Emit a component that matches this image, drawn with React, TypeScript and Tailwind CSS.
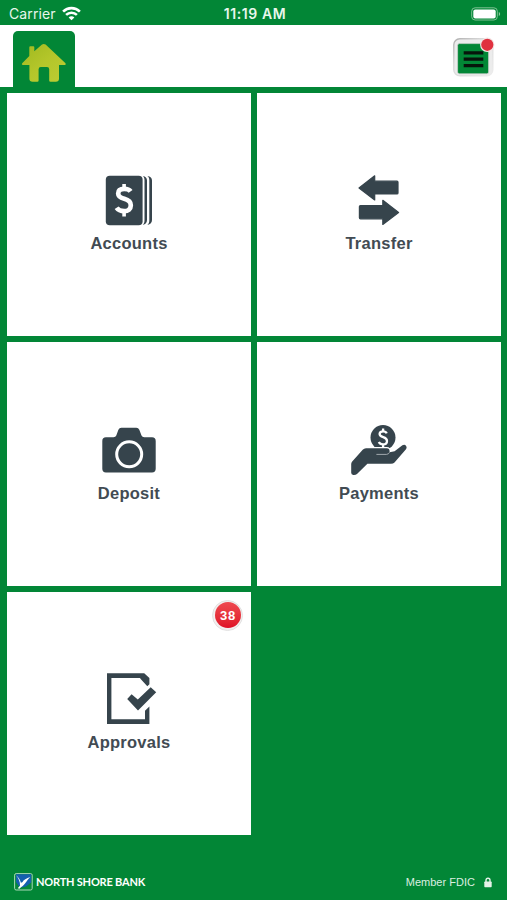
import { FC, ReactNode } from "react";

const ink = "#36444c";

const WifiIcon: FC = () => (
    <svg width="19" height="15" viewBox="0 0 19 15" fill="none" stroke="#fff" strokeWidth="2.6">
        <path d="M1.1 5.6C5.8 .9 13.2 .9 17.9 5.6" />
        <path d="M4.1 8.9C7.1 6 11.9 6 14.9 8.9" />
        <path d="M9.5 14.3L6.6 11.4C8.2 10 10.8 10 12.4 11.4Z" fill="#fff" stroke="none" />
    </svg>
);

const BatteryIcon: FC = () => (
    <svg width="30" height="14" viewBox="0 0 30 14">
        <rect x=".7" y=".8" width="25.6" height="12.2" rx="3.4" fill="none" stroke="#7fc193" />
        <rect x="2.3" y="2.4" width="22.4" height="9" rx="2" fill="#fff" />
        <path d="M27.8 5V9C29.6 8.2 29.6 5.8 27.8 5Z" fill="#8fc9a0" />
    </svg>
);

const HomeIcon: FC = () => (
    <svg width="46" height="40" viewBox="0 0 46 40">
        <defs>
            <linearGradient id="roof" x1="0" y1="0" x2="1" y2="1">
                <stop offset="0" stopColor="#9fb81f" />
                <stop offset=".5" stopColor="#b4c62a" />
                <stop offset="1" stopColor="#bccd34" />
            </linearGradient>
        </defs>
        <path
            d="M8.3 4.2Q8.3 3.2 9.3 3.2H12.3Q13.3 3.2 13.3 4.2V8.3L21 1.6Q22.8 .2 24.6 1.6L44.5 20.3Q45.4 22 43.8 22H38V35.5Q38 38.7 34.8 38.7H29.5Q28.2 38.7 28.2 37.4V26.2Q28.2 24 26 24H19.8Q17.6 24 17.6 26.2V37.4Q17.6 38.7 16.3 38.7H11.6Q8.4 38.7 8.4 35.5V22H1.8Q.2 22 1.2 20.3L8.3 13Z"
            fill="url(#roof)"
        />
    </svg>
);

const MenuIcon: FC = () => (
    <svg width="46" height="44" viewBox="0 0 46 44">
        <defs>
            <linearGradient id="bezel" x1="0" y1="0" x2="1" y2="1">
                <stop offset="0" stopColor="#b0b0b0" />
                <stop offset=".35" stopColor="#d8d8d8" />
                <stop offset="1" stopColor="#ededed" />
            </linearGradient>
        </defs>
        <rect x="1.8" y="3.8" width="39" height="37" rx="6" fill="#ececec" stroke="url(#bezel)" strokeWidth="1.4" />
        <rect x="5.6" y="8.6" width="31" height="30.2" rx="1.8" fill="#028736" stroke="#d2d2d2" strokeWidth=".7" />
        <path d="M11.7 17.8H31.3M11.7 24.2H31.3M11.7 30.6H31.3" stroke="#06150b" strokeWidth="3.2" />
        <circle cx="35.3" cy="9.8" r="7.2" fill="#f3e6e6" />
        <circle cx="35.3" cy="9.8" r="6.1" fill="#e0313f" />
    </svg>
);

const AccountsIcon: FC = () => (
    <svg width="60" height="60" viewBox="0 0 60 60" fill={ink}>
        <rect x="6.8" y="5.7" width="36.8" height="49.5" rx="4" />
        <path d="M43.8 6C46.5 6.5 48 8 48 10.5V50C48 52.6 46.5 54.2 43.8 54.9C45 53.8 45.5 52.3 45.5 50.5V10C45.5 8.2 45 7 43.8 6Z" />
        <path d="M48.4 6C51.5 6.5 53 8 53 10.5V50C53 52.6 51.5 54.2 48.4 54.9C49.8 53.8 50.3 52.3 50.3 50.5V10C50.3 8.2 49.8 7 48.4 6Z" />
        <path
            d="M31.6 21.3C30.3 19.4 27.9 18.8 25.2 18.8C21.4 18.8 19.2 20.5 19.2 23.4C19.2 26.5 21.5 27.7 25.3 28.8C29.4 30 31.8 31.4 31.8 35.2C31.8 39.2 29 41.2 25.2 41.2C21.8 41.2 19.2 40.2 17.6 37.8"
            fill="none"
            stroke="#fff"
            strokeWidth="4.7"
        />
        <path d="M25.1 14V18.8M25.1 41V46.6" stroke="#fff" strokeWidth="3.6" />
    </svg>
);

const TransferIcon: FC = () => (
    <svg width="60" height="60" viewBox="0 0 60 60" fill={ink} stroke={ink} strokeWidth="1.2" strokeLinejoin="round">
        <path d="M10 17.9L25.7 5.8V11.2H48Q49 11.2 49 12.2V23Q49 24 48 24H25.7V29.9Z" />
        <path d="M49.6 42.4L33.8 30.3V35.5H11.5Q10.4 35.5 10.4 36.5V47.8Q10.4 48.8 11.5 48.8H33.8V54.4Z" />
    </svg>
);

const DepositIcon: FC = () => (
    <svg width="60" height="60" viewBox="0 0 60 60" fill={ink}>
        <path d="M7 17.2H14.5Q16.6 17.2 17.3 15.4L19.4 9.8Q20.3 7.8 22.4 7.8H37.3Q39.4 7.8 40.3 9.8L42.5 15.4Q43.2 17.2 45.3 17.2H53Q56.7 17.2 56.7 20.9V48.8Q56.7 52.5 53 52.5H7Q3.3 52.5 3.3 48.8V20.9Q3.3 17.2 7 17.2Z" />
        <circle cx="30.2" cy="34.3" r="12.5" fill="none" stroke="#fff" strokeWidth="3" />
    </svg>
);

const PaymentsIcon: FC = () => (
    <svg width="60" height="60" viewBox="0 0 60 60" fill={ink}>
        <circle cx="34" cy="17.6" r="12.5" />
        <path
            d="M37.7 13.4C37.1 12 35.8 11.3 34.1 11.3C32 11.3 30.6 12.3 30.6 14C30.6 15.8 32.1 16.5 34.2 17.1C36.5 17.8 38 18.7 38 20.9C38 23.1 36.3 24.4 34 24.4C32 24.4 30.5 23.6 29.8 22.1M34.1 8.6V11.5M34.1 24.2V27"
            fill="none"
            stroke="#fff"
            strokeWidth="2.3"
        />
        <path
            d="M17 28.3H37.8Q40.6 28.5 40.6 31.2V32.3L45.6 31.2L53.4 25.3Q55.6 24 57 25.8Q58.2 27.3 57.2 28.9L45.5 42.5Q44.2 43.8 42 43.8H18.4L8 54Q6.6 55.1 4.3 54.9Q2.2 54.7 2.2 52.8V43.9Q2.2 42.6 3.2 41.5L13.7 29.8Q15 28.3 17 28.3Z"
            stroke="#fff"
            strokeWidth="2.4"
            paintOrder="stroke"
        />
        <path d="M27.4 34.4H37.5Q39.6 34.3 40.6 32.3" fill="none" stroke="#aeb4b8" strokeWidth=".9" />
    </svg>
);

const ApprovalsIcon: FC = () => (
    <svg width="60" height="60" viewBox="0 0 60 60" fill={ink}>
        <path d="M8 4.3H45.2L50.4 8.9V15.2L48.3 17.2L41.2 9.5V9H12.4V50.2H46V41.8L50.4 37.4V55H8Z" />
        <path d="M28.2 29.9L32.6 25.3L38.8 30.4L51.7 18.2L57.2 23.3L39 41.4Z" />
    </svg>
);

const BankLogo: FC = () => (
    <svg width="19" height="18" viewBox="0 0 19 18">
        <rect x=".6" y=".6" width="17.6" height="16.4" rx="1.6" fill="#07883a" stroke="#a9dab7" />
        <path d="M2 1.2H17.2V9.5L12 13.6L6 14.8L2 9Z" fill="#1560ae" />
        <path d="M2 2.3C5 4.8 6.2 7 6.9 9.8L8.3 9.2C9.6 6.6 12.5 5.2 16.3 3.9C13.7 6.5 12.5 8.4 10.8 10.7C9.6 12.6 7.4 13.5 5.5 15.7L3.7 15.2L6 12.7C6.2 9 4.7 5.2 2 2.3Z" fill="#fff" />
    </svg>
);

const LockIcon: FC = () => (
    <svg width="8" height="11" viewBox="0 0 8 11">
        <path d="M2 5V3.3Q2 1.2 4 1.2Q6 1.2 6 3.3V5" fill="none" stroke="#e5f2e8" strokeWidth="1.4" />
        <rect x=".3" y="4.5" width="7.4" height="5.8" rx=".7" fill="#e5f2e8" />
    </svg>
);

type TileProps = {
    label: string;
    icon: ReactNode;
    count?: number;
};

const Tile: FC<TileProps> = ({ label, icon, count }) => (
    <div className="relative flex flex-col items-center bg-white pt-[77.5px]">
        {icon}
        <div className="mt-[3px] text-[16.5px] leading-5 font-bold tracking-[0.25px] text-[#424b53]">{label}</div>
        {count !== undefined && (
            <div className="absolute top-[8px] right-[8px] flex size-[31px] items-center justify-center rounded-full border border-[#e2e2e2] bg-[#f3eeee]">
                <div className="flex size-[26px] items-center justify-center rounded-full bg-linear-to-b from-[#ee4950] to-[#df0d26] pl-px text-[13px] font-bold tracking-[0.8px] text-white">
                    {count}
                </div>
            </div>
        )}
    </div>
);

const tiles: TileProps[] = [
    { label: "Accounts", icon: <AccountsIcon /> },
    { label: "Transfer", icon: <TransferIcon /> },
    { label: "Deposit", icon: <DepositIcon /> },
    { label: "Payments", icon: <PaymentsIcon /> },
    { label: "Approvals", icon: <ApprovalsIcon />, count: 38 },
];

export default function App() {
    return (
        <div className="flex h-[900px] w-[507px] flex-col overflow-hidden bg-[#028636] font-['Liberation_Sans',Arial,sans-serif]">

            {/* status bar */}
            <div className="grid h-[25px] grid-cols-3 items-center pt-[2px] pr-[6px] pl-[9px] font-[Inter,sans-serif] text-[#e8f6ec]">
                <div className="flex items-center gap-[6px]">
                    <span className="text-[14px] tracking-[0.1px]">Carrier</span>
                    <WifiIcon />
                </div>
                <div className="text-center text-[14px] font-semibold tracking-[0.6px]">11:19 AM</div>
                <div className="flex justify-end">
                    <BatteryIcon />
                </div>
            </div>

            <header className="flex h-[61.5px] justify-between bg-white pr-[9px] pl-[13px]">
                <div className="mt-[6px] flex w-[61.5px] justify-center rounded-t-[5px] bg-[#028636] pt-[12px]">
                    <HomeIcon />
                </div>
                <div className="pt-[10px]">
                    <MenuIcon />
                </div>
            </header>

            <main className="grid grid-cols-[244px_244px] auto-rows-[243.5px] gap-x-[6px] gap-y-[6.2px] pt-[6px] pl-[7px]">
                {tiles.map((tile) => (
                    <Tile key={tile.label} {...tile} />
                ))}
            </main>

            <footer className="mt-auto flex h-[36px] items-center justify-between pr-[15px] pl-[14px] text-white">
                <div className="flex items-center gap-[3px]">
                    <BankLogo />
                    <span className="font-[Lato,sans-serif] text-[11px] font-bold tracking-[-0.2px]">NORTH SHORE BANK</span>
                </div>
                <div className="flex items-center gap-[9px] text-[11px] tracking-[0.02px] text-[#dceee1]">
                    <span>Member FDIC</span>
                    <LockIcon />
                </div>
            </footer>
        </div>
    );
}
